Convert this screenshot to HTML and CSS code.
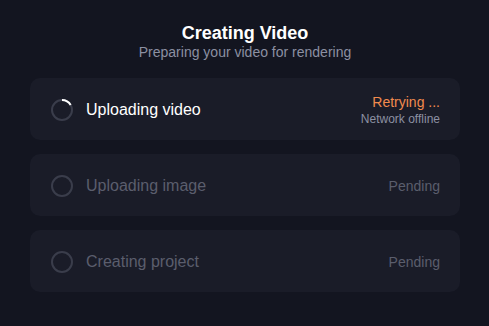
FILE: index.html
```html
<!DOCTYPE html>
<html>
<head>
<meta charset="utf-8">
<link rel="stylesheet" href="styles.css">
</head>
<body>
<div class="page">
  <header class="head">
    <h1 class="title">Creating Video</h1>
    <p class="sub">Preparing your video for rendering</p>
  </header>
  <div class="list">
    <div class="card">
      <svg class="icon" width="24" height="24" viewBox="0 0 24 24">
        <circle cx="12" cy="12" r="10" fill="none" stroke="#3a3d4b" stroke-width="2"/>
        <path d="M12 2 A10 10 0 0 1 20.66 7" fill="none" stroke="#ffffff" stroke-width="2"/>
      </svg>
      <span class="label active">Uploading video</span>
      <div class="status">
        <span class="retry">Retrying ...</span>
        <span class="note">Network offline</span>
      </div>
    </div>
    <div class="card">
      <svg class="icon" width="24" height="24" viewBox="0 0 24 24">
        <circle cx="12" cy="12" r="10" fill="none" stroke="#3a3d4b" stroke-width="2"/>
      </svg>
      <span class="label">Uploading image</span>
      <div class="status"><span class="pending">Pending</span></div>
    </div>
    <div class="card">
      <svg class="icon" width="24" height="24" viewBox="0 0 24 24">
        <circle cx="12" cy="12" r="10" fill="none" stroke="#3a3d4b" stroke-width="2"/>
      </svg>
      <span class="label">Creating project</span>
      <div class="status"><span class="pending">Pending</span></div>
    </div>
  </div>
</div>
</body>
</html>
```
FILE: styles.css
```css
html, body {
  margin: 0;
  padding: 0;
  background: #131520;
  font-family: "Liberation Sans", Arial, sans-serif;
}
.page {
  width: 489px;
  height: 326px;
  padding: 22px 29px 0 30px;
  box-sizing: border-box;
}
.head {
  text-align: center;
}
.title {
  margin: 0;
  font-size: 18px;
  font-weight: 700;
  color: #ffffff;
  line-height: 22px;
}
.sub {
  margin: 0;
  font-size: 14px;
  color: #8c90a2;
  line-height: 16px;
}
.list {
  margin-top: 18px;
  display: flex;
  flex-direction: column;
  gap: 14px;
}
.card {
  height: 62px;
  background: #1a1c28;
  border-radius: 10px;
  display: flex;
  align-items: center;
  padding: 2px 20px 0 20px;
  box-sizing: border-box;
}
.icon {
  flex: none;
  margin-right: 12px;
}
.label {
  font-size: 16px;
  color: #5b5e6d;
  flex: 1;
}
.label.active {
  color: #ffffff;
}
.status {
  display: flex;
  flex-direction: column;
  align-items: flex-end;
}
.retry {
  font-size: 14px;
  color: #f28b4e;
  line-height: 17px;
}
.note {
  font-size: 12px;
  color: #8c90a2;
  line-height: 16px;
}
.pending {
  font-size: 14px;
  color: #5b5e6d;
}
```
